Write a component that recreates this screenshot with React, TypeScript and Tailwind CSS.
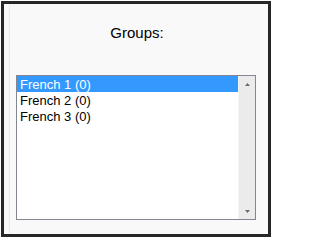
const groups = ["French 1 (0)", "French 2 (0)", "French 3 (0)"];

export default function App() {
  const selected = 0;

  return (
    <div className="w-[272px] h-[238px] bg-white pt-px pl-px">
      <div className="flex w-[270px] h-[236px] border-[3px] border-[#262626] bg-[#f9f9f9] font-['Liberation_Sans',Arial,sans-serif]">
        <div className="ml-[5px] w-px bg-[#ebebeb]" />
        <div className="flex-1 flex flex-col">
          <div className="pt-[20px] pr-[4px] text-center text-[15px] leading-[18px] text-black">
            Groups:
          </div>
          <div className="mt-[33px] ml-[6px] flex w-[240px] h-[145px] border border-[#828790] bg-white">
            <ul className="flex-1">
              {groups.map((group, index) => (
                <li
                  key={group}
                  className={`h-[16px] pt-px pl-[3px] text-[13px] leading-[15px] ${
                    index === selected ? "bg-[#3399ff] text-white" : "text-black"
                  }`}
                >
                  {group}
                </li>
              ))}
            </ul>
            <div className="w-[17px] flex flex-col items-center justify-between border-l border-[#f4f4f4] bg-[#ebebeb] pt-[7px] pb-[6px]">
              <svg width="5" height="3" viewBox="0 0 5 3">
                <path d="M2.5 0 L5 3 L0 3 Z" fill="#6a6a6a" />
              </svg>
              <svg width="5" height="3" viewBox="0 0 5 3">
                <path d="M0 0 L5 0 L2.5 3 Z" fill="#6a6a6a" />
              </svg>
            </div>
          </div>
        </div>
      </div>
    </div>
  );
}
